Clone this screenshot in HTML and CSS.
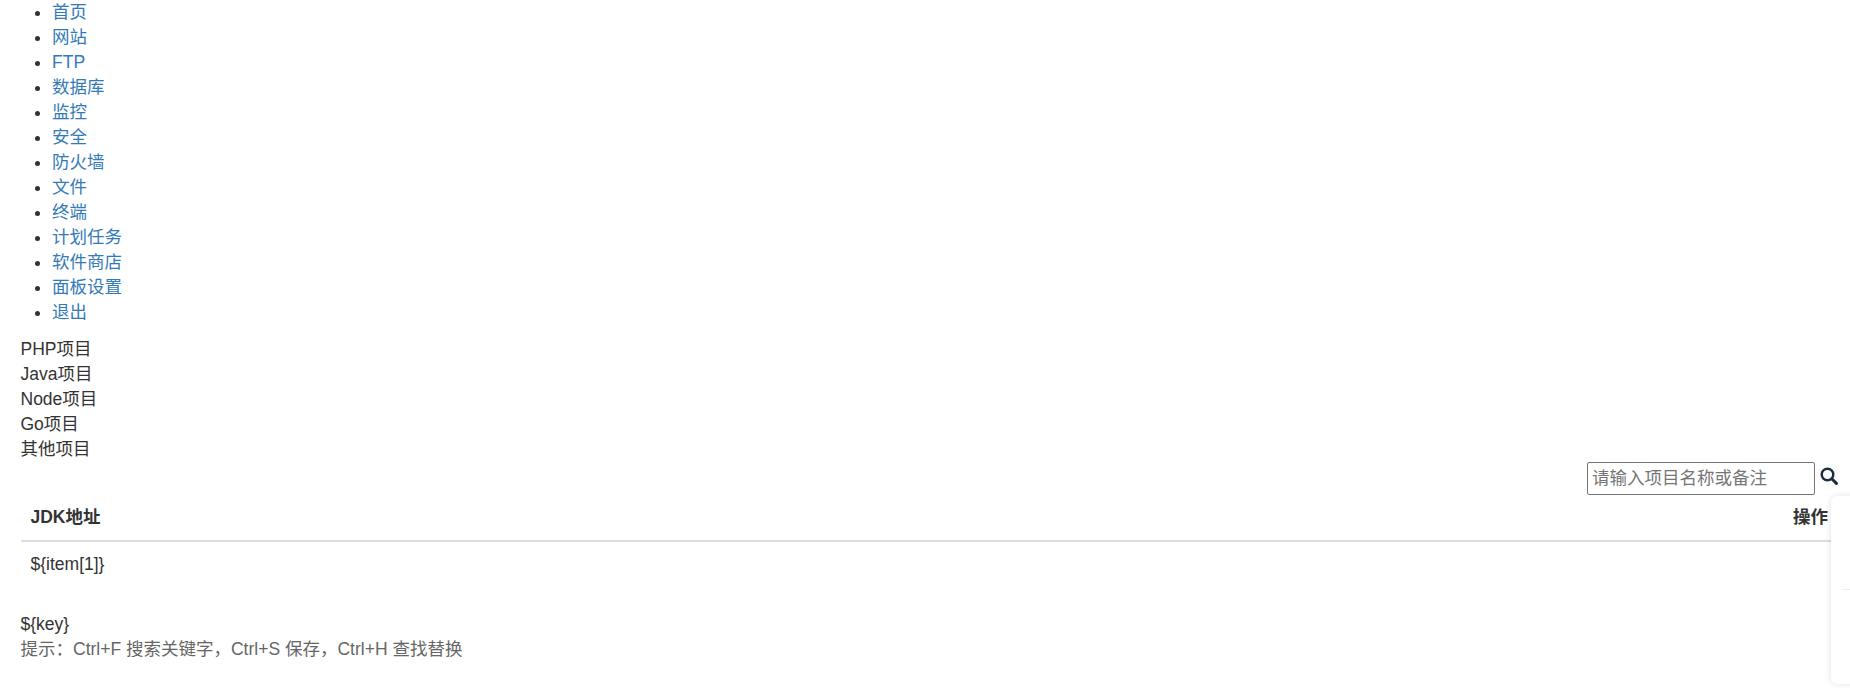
FILE: index.html
```html
<!DOCTYPE html>
<html lang="zh-CN">
<head>
    <meta charset="UTF-8">
    <title>项目管理</title>
    <link rel="stylesheet" href="styles.css">
</head>
<body>
    <ul class="nav">
        <li><a href="#">首页</a></li>
        <li><a href="#">网站</a></li>
        <li><a href="#">FTP</a></li>
        <li><a href="#">数据库</a></li>
        <li><a href="#">监控</a></li>
        <li><a href="#">安全</a></li>
        <li><a href="#">防火墙</a></li>
        <li><a href="#">文件</a></li>
        <li><a href="#">终端</a></li>
        <li><a href="#">计划任务</a></li>
        <li><a href="#">软件商店</a></li>
        <li><a href="#">面板设置</a></li>
        <li><a href="#">退出</a></li>
    </ul>
    <div class="content">
        <div class="tabs">
            <div>PHP项目</div>
            <div>Java项目</div>
            <div>Node项目</div>
            <div>Go项目</div>
            <div>其他项目</div>
        </div>
        <div class="search">
            <input class="search-input" type="text" placeholder="请输入项目名称或备注">
            <svg class="search-icon" viewBox="0 0 18 18" width="18" height="18">
                <circle cx="7.5" cy="7.5" r="5.8" fill="none" stroke="#1f2d3d" stroke-width="2.4"/>
                <path d="M11.8 11.8L16.4 16.4" stroke="#1f2d3d" stroke-width="3" stroke-linecap="round"/>
            </svg>
        </div>
        <table class="list">
            <thead>
                <tr><th>JDK地址</th><th class="right">操作</th></tr>
            </thead>
            <tbody>
                <tr><td>${item[1]}</td><td></td></tr>
            </tbody>
        </table>
        <div class="key">${key}</div>
        <div class="hint">提示：Ctrl+F 搜索关键字，Ctrl+S 保存，Ctrl+H 查找替换</div>
    </div>
    <div class="side-panel">
        <div class="side-line"></div>
    </div>
</body>
</html>
```

FILE: styles.css
```css
* {
    box-sizing: border-box;
}
html, body {
    height: 100%;
}
body {
    margin: 0;
    overflow: hidden;
    background: #fff;
    color: #333;
    font-family: "Liberation Sans", "Noto Sans CJK SC", sans-serif;
    font-size: 17.5px;
    line-height: 25px;
}
a {
    color: #337ab7;
    text-decoration: none;
}
.nav {
    margin: 0 0 12px 0;
    padding-left: 52px;
}
.content {
    padding: 0 0 0 20.5px;
}
.search {
    display: flex;
    justify-content: flex-end;
    align-items: flex-start;
    gap: 5px;
    padding-right: 12px;
    height: 33px;
}
.search-input {
    width: 228px;
    height: 33px;
    padding: 1px 4px;
    border: 1px solid #767676;
    border-radius: 2px;
    font-family: inherit;
    font-size: 17.5px;
    color: #333;
}
.search-input::placeholder {
    color: #757575;
}
.search-icon {
    display: block;
    margin-top: 5px;
}
.list {
    width: 100%;
    border-collapse: collapse;
}
.list th {
    height: 46px;
    padding: 0 10px;
    text-align: left;
    border-bottom: 2px solid #ddd;
}
.list th.right {
    text-align: right;
    padding-right: 22px;
}
.list td {
    height: 46px;
    padding: 0 10px;
}
.key {
    margin-top: 25px;
}
.hint {
    color: #666;
}
.side-panel {
    position: absolute;
    left: 1831px;
    top: 496px;
    width: 40px;
    height: 188px;
    background: #fff;
    border-radius: 6px;
    box-shadow: 0 0 6px rgba(0, 0, 0, 0.12);
}
.side-line {
    margin: 93px 0 0 11px;
    height: 1px;
    background: #eee;
}
```
